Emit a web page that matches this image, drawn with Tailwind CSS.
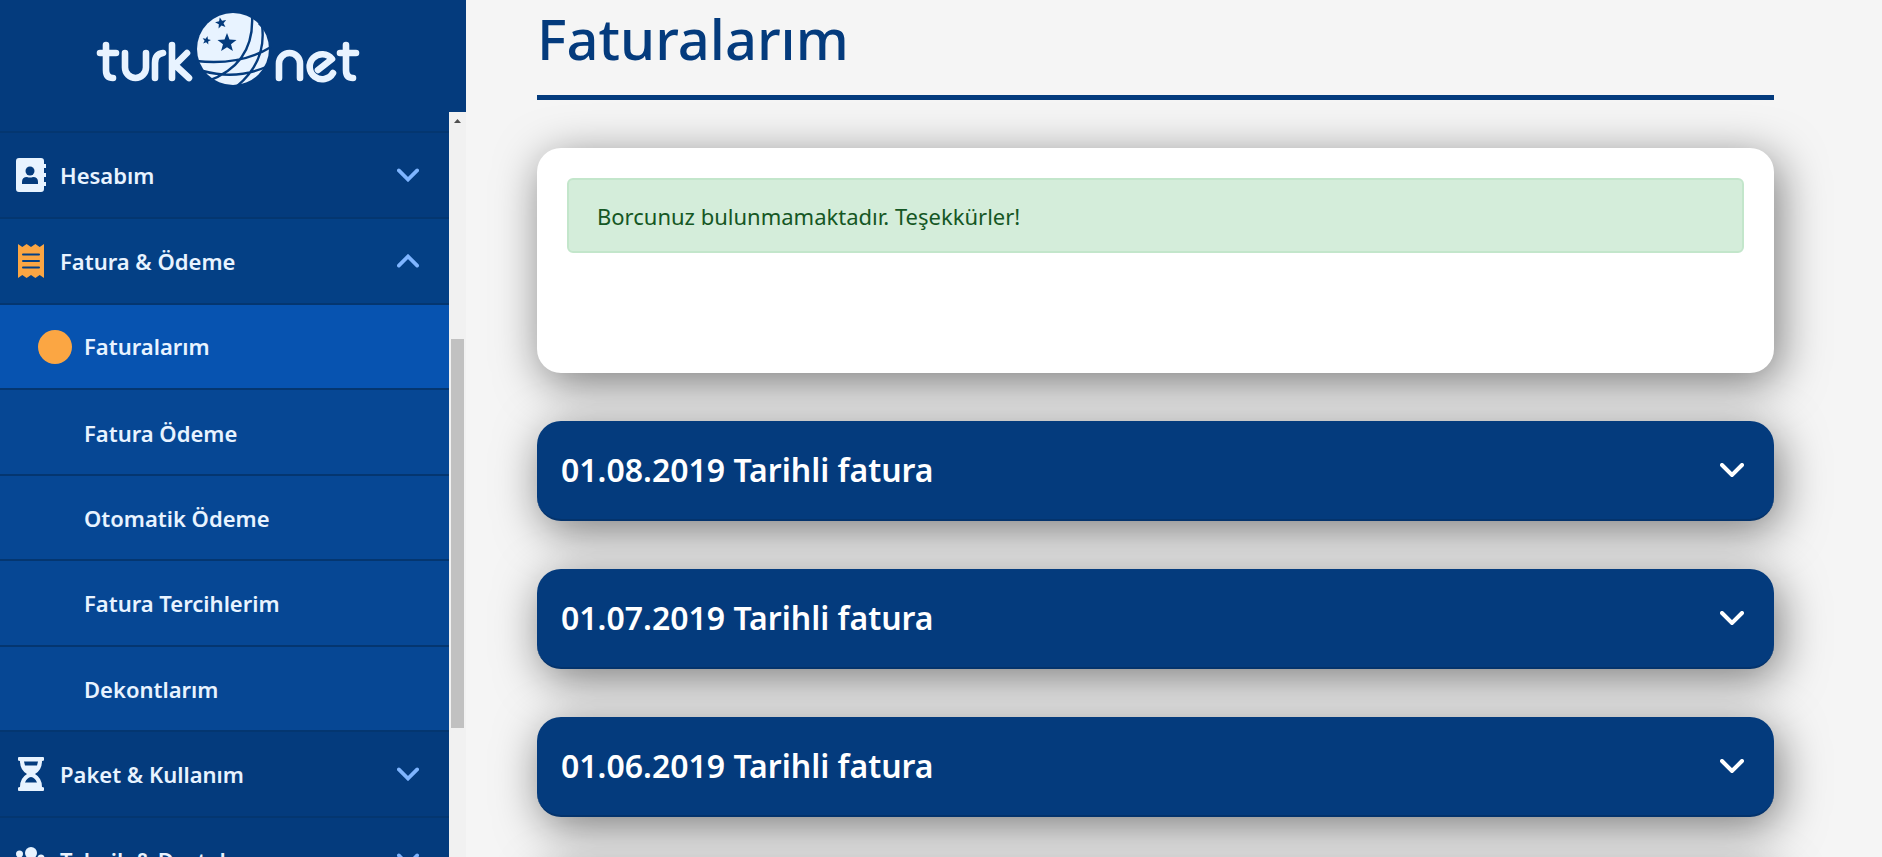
<!DOCTYPE html>
<html lang="tr">

<head>
    <meta charset="UTF-8">
    <meta name="viewport" content="width=device-width, initial-scale=1.0">
    <title>Faturalarım - TurkNet</title>
    <script src="https://cdn.jsdelivr.net/npm/@tailwindcss/browser@4"></script>
</head>

<body class="flex h-screen overflow-hidden bg-[#f5f5f5] font-['Noto_Sans',sans-serif]">
    <!-- Shared icons -->
    <svg class="hidden">
        <symbol id="chevron" viewBox="0 0 24 14">
            <path d="M2 2l10 10L22 2" fill="none" stroke="currentColor" stroke-width="4" stroke-linecap="round" />
        </symbol>
        <symbol id="star" viewBox="-1 -1 2 2">
            <path d="M0-1L.25-.34 .95-.31 .4.13 .59.81 0 .42-.59.81-.4.13-.95-.31-.25-.34z" />
        </symbol>
    </svg>

    <!-- Sidebar -->
    <aside class="flex w-[466px] shrink-0 flex-col bg-[#043b7d] text-[#e8f3ff]">
        <a href="#" aria-label="turk net" class="flex h-28 shrink-0 justify-center pt-3 pr-2.5">
            <svg class="h-[74px] w-[264px]" viewBox="96 12 264 74" fill="none">
                <g stroke="#e8f3ff" stroke-width="6.600" stroke-linecap="round" stroke-linejoin="round">
                    <path d="M106 45v25q0 8 7 8M100 53h16" />
                    <path d="M125 53v14.500a10.500 10.500 0 0 0 21 0V53" />
                    <path d="M155 78V63q0-9 8-10" />
                    <path d="M172 45v33M187 53l-12 12 14 13" />
                    <path d="M279 78V63.500a10.500 10.500 0 0 1 21 0V78" />
                    <path d="M333 73A12.500 12.500 0 1 1 332 59l-14 11" />
                    <path d="M346 45v25q0 8 7 8M340 53h16" />
                </g>
                <circle cx="233" cy="49" r="36" fill="#e8f3ff" />
                <path stroke="#043b7d" stroke-width="2.400"
                    d="M252 15Q255 64 208 81M262 25Q267 62 236 87M196 61Q240 66 271 47M203 71Q236 80 266 67" />
                <path stroke="#043b7d" stroke-width="3" d="M259 23l6 6" />
                <g fill="#043b7d">
                    <use href="#star" x="217" y="33" width="20" height="20" />
                    <use href="#star" x="215" y="17" width="12" height="12" transform="rotate(-12 221 23)" />
                    <use href="#star" x="202" y="36" width="9" height="9" transform="rotate(12 206.500 40.500)" />
                </g>
            </svg>
        </a>

        <div class="flex min-h-0 flex-1">
            <nav class="min-w-0 flex-1 overflow-hidden pt-[19px] text-[22px] font-semibold">
                <ul>
                    <li>
                        <button class="flex h-[86px] w-full items-center border-t-2 border-[#043670] pr-[30px] pl-4">
                            <svg class="mr-3.5 h-[34px] w-[30px]" viewBox="0 0 30 34" fill="currentColor">
                                <path d="M3 0h22q3 0 3 3v3h2v4h-2v5h2v4h-2v5h2v4h-2v3q0 3-3 3H3q-3 0-3-3V3q0-3 3-3z" />
                                <g fill="#043b7d">
                                    <circle cx="14" cy="13" r="4.500" />
                                    <path d="M6 26v-2q0-5 5-5 3 1 6 0 5 0 5 5v2z" />
                                </g>
                            </svg>
                            Hesabım
                            <svg class="ml-auto h-3.5 w-[22px] text-[#7fb5ff]"><use href="#chevron" /></svg>
                        </button>
                    </li>
                    <li>
                        <button class="flex h-[86px] w-full items-center border-t-2 border-[#043670] bg-[#044085] pr-[30px] pl-4">
                            <svg class="mr-3.5 h-[34px] w-[30px]" viewBox="0 0 30 34" fill="#fba643">
                                <path d="M2 0l4.300 3L10.600 0l4.400 3 4.400-3 4.300 3L28 0v34l-4.300-3-4.300 3-4.400-3-4.400 3-4.300-3L2 34z" />
                                <path d="M7 10.500h16M7 17h16M7 23.500h16" stroke="#044085" stroke-width="2" stroke-linecap="round" />
                            </svg>
                            Fatura &amp; Ödeme
                            <svg class="ml-auto h-3.5 w-[22px] rotate-180 text-[#7fb5ff]"><use href="#chevron" /></svg>
                        </button>
                        <ul class="grid h-[427px] grid-rows-5 bg-[#064794]">
                            <li>
                                <a href="#" class="flex h-full items-center gap-3 border-t-2 border-[#043670] bg-[#0753b0] pl-[38px]">
                                    <span class="size-[34px] rounded-full bg-[#fba643]"></span>
                                    Faturalarım
                                </a>
                            </li>
                            <li><a href="#" class="flex h-full items-center border-t-2 border-[#043670] pt-0.5 pl-[84px]">Fatura Ödeme</a></li>
                            <li><a href="#" class="flex h-full items-center border-t-2 border-[#043670] pt-0.5 pl-[84px]">Otomatik Ödeme</a></li>
                            <li><a href="#" class="flex h-full items-center border-t-2 border-[#043670] pt-0.5 pl-[84px]">Fatura Tercihlerim</a></li>
                            <li><a href="#" class="flex h-full items-center border-t-2 border-[#043670] pt-0.5 pl-[84px]">Dekontlarım</a></li>
                        </ul>
                    </li>
                    <li>
                        <button class="flex h-[86px] w-full items-center border-t-2 border-[#043670] pr-[30px] pl-4">
                            <svg class="mr-3.5 h-[34px] w-[30px]" viewBox="0 0 30 34" fill="currentColor">
                                <path d="M3 0h24q1 0 1 1v2q0 1-2 1 0 9-7 13 7 4 7 13 2 0 2 1v2q0 1-1 1H3q-1 0-1-1v-2q0-1 2-1 0-9 7-13Q4 13 4 4 2 4 2 3V1q0-1 1-1z" />
                                <path fill="#043b7d" d="M8 4.500h14l-1 4H9zM9 25.500q2-5 6-5.500 4 .5 6 5.500z" />
                            </svg>
                            Paket &amp; Kullanım
                            <svg class="ml-auto h-3.5 w-[22px] text-[#7fb5ff]"><use href="#chevron" /></svg>
                        </button>
                    </li>
                    <li>
                        <button class="flex h-[86px] w-full items-center border-t-2 border-[#043670] pr-[30px] pl-4">
                            <svg class="mr-3.5 h-[34px] w-[30px]" viewBox="0 0 30 34" fill="currentColor">
                                <circle cx="3.500" cy="11" r="3.500" />
                                <circle cx="15" cy="10" r="6" />
                                <circle cx="25" cy="15" r="3.500" />
                                <path d="M0 24q0-7 6-6 1 3 4 4-5 2-5 8H0zM7 30q0-8 8-8t8 8z" />
                            </svg>
                            Teknik &amp; Destek
                            <svg class="ml-auto h-3.5 w-[22px] text-[#7fb5ff]"><use href="#chevron" /></svg>
                        </button>
                    </li>
                </ul>
            </nav>

            <!-- Scrollbar -->
            <div class="flex w-[17px] flex-col items-center bg-[#f1f1f1]">
                <svg class="h-[17px] w-[17px] shrink-0" viewBox="0 0 17 17" fill="#505050">
                    <path d="M5 11l3.500-4L12 11z" />
                </svg>
                <div class="mt-[210px] h-[389px] w-[13px] bg-[#c1c1c1]"></div>
            </div>
        </div>
    </aside>

    <!-- Content -->
    <main class="min-w-0 flex-1 overflow-hidden pr-[108px] pl-[71px]">
        <h1 class="h-[100px] border-b-5 border-[#043b7d] text-[56px] leading-[76px] font-medium text-[#043b7d]">Faturalarım</h1>

        <section class="mt-12 min-h-[225px] rounded-3xl bg-white p-[30px] shadow-[5px_10px_46px_rgba(0,0,0,0.5)]">
            <p class="rounded-md border-2 border-[#c3e6cb] bg-[#d4edda] px-7 pt-[19px] pb-[17px] text-[22px] leading-[35px] text-[#155724]">Borcunuz bulunmamaktadır. Teşekkürler!</p>
        </section>

        <button class="mt-12 flex h-[100px] w-full items-center justify-between rounded-3xl border-b-2 border-[#04336c] bg-[#043b7d] pr-[30px] pl-6 text-[32px] font-semibold text-white shadow-[5px_10px_46px_rgba(0,0,0,0.5)]">
            01.08.2019 Tarihli fatura
            <svg class="h-3.5 w-6"><use href="#chevron" /></svg>
        </button>
        <button class="mt-12 flex h-[100px] w-full items-center justify-between rounded-3xl border-b-2 border-[#04336c] bg-[#043b7d] pr-[30px] pl-6 text-[32px] font-semibold text-white shadow-[5px_10px_46px_rgba(0,0,0,0.5)]">
            01.07.2019 Tarihli fatura
            <svg class="h-3.5 w-6"><use href="#chevron" /></svg>
        </button>
        <button class="mt-12 flex h-[100px] w-full items-center justify-between rounded-3xl border-b-2 border-[#04336c] bg-[#043b7d] pr-[30px] pl-6 text-[32px] font-semibold text-white shadow-[5px_10px_46px_rgba(0,0,0,0.5)]">
            01.06.2019 Tarihli fatura
            <svg class="h-3.5 w-6"><use href="#chevron" /></svg>
        </button>
        <div class="mt-12 h-[100px] rounded-3xl bg-[#043b7d] shadow-[5px_10px_46px_rgba(0,0,0,0.5)]"></div>
    </main>
</body>

</html>
